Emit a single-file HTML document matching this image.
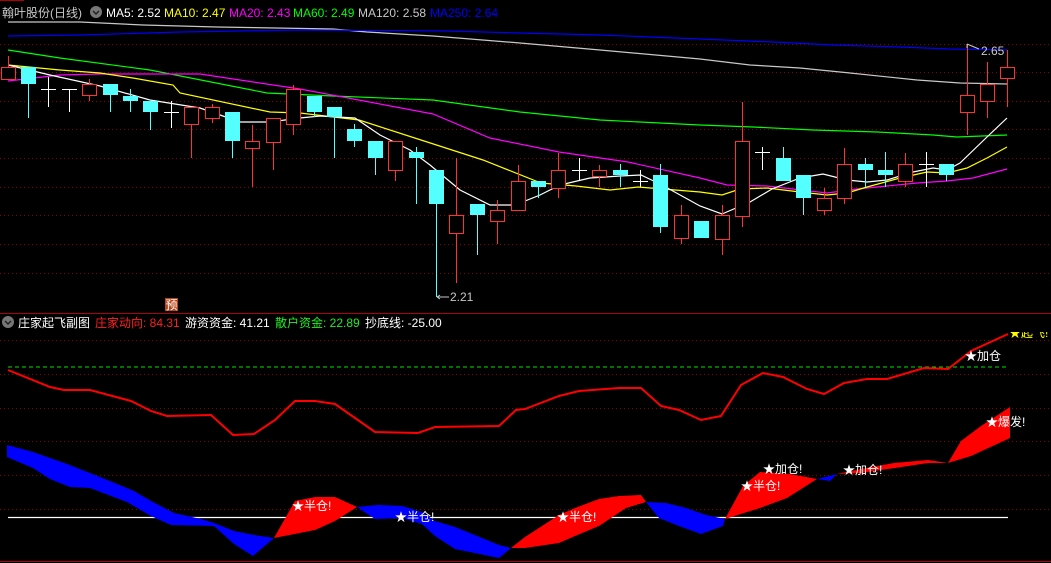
<!DOCTYPE html>
<html><head><meta charset="utf-8">
<style>
html,body{margin:0;padding:0;background:#000;overflow:hidden}
svg{display:block}
text{font-family:"Liberation Sans","Noto Sans CJK SC",sans-serif;font-size:12px}
.g{stroke:#8a0000;stroke-width:1;stroke-dasharray:1,3}
.R{fill:#000;stroke:#ff3232;stroke-width:1}
.Rw{stroke:#ff3232;stroke-width:1}
.C{fill:#54ffff}
.Cw{stroke:#54ffff;stroke-width:1}
.X{stroke:#fff;stroke-width:1}
.ma{fill:none;stroke-width:1.2}
</style></head>
<body>
<svg width="1051" height="563" viewBox="0 0 1051 563" xmlns="http://www.w3.org/2000/svg">
<rect width="1051" height="563" fill="#000"/>
<line x1="0" y1="0.5" x2="24" y2="0.5" stroke="#b00000"/>
<text x="2" y="17" fill="#c8c8c8" font-size="13">翰叶股份(日线)</text>
<circle cx="96" cy="12" r="6" fill="#777"/>
<path d="M93 11 l3 3 l3 -3" stroke="#222" stroke-width="1.5" fill="none"/>
<text x="106" y="17" fill="#fff">MA5: 2.52</text>
<text x="164" y="17" fill="#ffff00">MA10: 2.47</text>
<text x="229" y="17" fill="#ff00ff">MA20: 2.43</text>
<text x="293" y="17" fill="#00ff00">MA60: 2.49</text>
<text x="358" y="17" fill="#c8c8c8">MA120: 2.58</text>
<text x="430" y="17" fill="#0000ff">MA250: 2.64</text>
<g class="g">
<line x1="0" y1="44.5" x2="1051" y2="44.5"/><line x1="0" y1="72.5" x2="1051" y2="72.5"/>
<line x1="0" y1="101.5" x2="1051" y2="101.5"/><line x1="0" y1="129.5" x2="1051" y2="129.5"/>
<line x1="0" y1="158.5" x2="1051" y2="158.5"/><line x1="0" y1="187.5" x2="1051" y2="187.5"/>
<line x1="0" y1="215.5" x2="1051" y2="215.5"/><line x1="0" y1="244.5" x2="1051" y2="244.5"/>
<line x1="0" y1="273.5" x2="1051" y2="273.5"/>
</g>
<polyline class="ma" stroke="#c8c8c8" points="8,22 80,22 143,25 217,27 333,29 367,32 433,36 520,43 600,50 700,59 750,65 800,68 850,73 917,80 960,83 1007,84"/>
<polyline class="ma" stroke="#0000ff" points="8,36 80,35 180,32 300,30 447,31 520,33 600,35 700,39 773,42 833,45 900,47 950,49 1007,50"/>
<polyline class="ma" stroke="#00ff00" points="8,50 60,58 150,70 267,93 333,96 433,100 520,112 600,120 700,125 753,127 813,130 877,132 933,135 957,137 1007,135"/>
<polyline class="ma" stroke="#ff00ff" points="8,81 60,75 100,74 200,74 300,89 433,114 490,138 559,152 628,162 700,178 727,185 767,186 827,193 857,189 887,186 917,183 947,181 973,178 1007,169"/>
<polyline class="ma" stroke="#ffff00" points="8,65 60,70 100,73 133,78 173,85 180,93 270,112 300,113 359,120 421,140 483,160 541,183 576,186 610,190 638,187 700,192 722,195 740,189 767,188 800,192 827,195 847,193 867,187 900,178 927,172 947,173 967,168 987,158 1007,147"/>
<polyline class="ma" stroke="#ffffff" points="8,65 50,75 100,86 150,100 200,108 240,122 270,122 300,118 320,116 355,118 380,135 410,150 430,165 460,190 490,205 515,205 540,195 560,185 590,178 620,176 641,175 662,185 700,206 722,214 750,202 772,189 800,178 823,174 847,180 867,182 887,180 913,172 933,168 947,170 960,163 987,137 1007,118"/>
<g>
<line class="Rw" x1="8.5" y1="56" x2="8.5" y2="79"/><rect class="R" x="1.5" y="67.5" width="14" height="12"/>
<line class="Cw" x1="28.5" y1="67" x2="28.5" y2="118"/><rect class="C" x="21" y="67" width="15" height="17"/>
<line class="X" x1="48.5" y1="77" x2="48.5" y2="107"/><line class="X" x1="41" y1="89.5" x2="56" y2="89.5"/>
<line class="X" x1="69.5" y1="89" x2="69.5" y2="112"/><line class="X" x1="62" y1="89.5" x2="77" y2="89.5"/>
<line class="Rw" x1="89.5" y1="79" x2="89.5" y2="101"/><rect class="R" x="82.5" y="84.5" width="14" height="11"/>
<line class="Cw" x1="110.5" y1="84" x2="110.5" y2="112"/><rect class="C" x="103" y="84" width="15" height="11"/>
<line class="Cw" x1="130.5" y1="89" x2="130.5" y2="112"/><rect class="C" x="123" y="96" width="15" height="5"/>
<line class="Cw" x1="150.5" y1="101" x2="150.5" y2="130"/><rect class="C" x="143" y="101" width="15" height="11"/>
<line class="X" x1="171.5" y1="101" x2="171.5" y2="128"/><line class="X" x1="164" y1="112.5" x2="179" y2="112.5"/>
<line class="Rw" x1="191.5" y1="107" x2="191.5" y2="158"/><rect class="R" x="184.5" y="107.5" width="14" height="17"/>
<line class="Rw" x1="212.5" y1="104" x2="212.5" y2="123"/><rect class="R" x="205.5" y="107.5" width="14" height="11"/>
<line class="Cw" x1="232.5" y1="112" x2="232.5" y2="158"/><rect class="C" x="225" y="112" width="15" height="29"/>
<line class="Rw" x1="252.5" y1="125" x2="252.5" y2="187"/><rect class="R" x="245.5" y="141.5" width="14" height="7"/>
<line class="Rw" x1="273.5" y1="118" x2="273.5" y2="170"/><rect class="R" x="266.5" y="118.5" width="14" height="24"/>
<line class="Rw" x1="293.5" y1="85" x2="293.5" y2="135"/><rect class="R" x="286.5" y="89.5" width="14" height="35"/>
<line class="Cw" x1="314.5" y1="96" x2="314.5" y2="117"/><rect class="C" x="307" y="96" width="15" height="16"/>
<line class="Cw" x1="334.5" y1="107" x2="334.5" y2="158"/><rect class="C" x="327" y="107" width="15" height="10"/>
<line class="Cw" x1="354.5" y1="124" x2="354.5" y2="147"/><rect class="C" x="347" y="129" width="15" height="12"/>
<line class="Cw" x1="375.5" y1="141" x2="375.5" y2="175"/><rect class="C" x="368" y="141" width="15" height="17"/>
<line class="Rw" x1="395.5" y1="141" x2="395.5" y2="181"/><rect class="R" x="388.5" y="141.5" width="14" height="29"/>
<line class="Cw" x1="416.5" y1="147" x2="416.5" y2="204"/><rect class="C" x="409" y="152" width="15" height="6"/>
<line class="Cw" x1="436.5" y1="170" x2="436.5" y2="297"/><rect class="C" x="429" y="170" width="15" height="34"/>
<line class="Rw" x1="456.5" y1="158" x2="456.5" y2="283"/><rect class="R" x="449.5" y="215.5" width="14" height="18"/>
<line class="Cw" x1="477.5" y1="204" x2="477.5" y2="255"/><rect class="C" x="470" y="204" width="15" height="11"/>
<line class="Rw" x1="497.5" y1="200" x2="497.5" y2="244"/><rect class="R" x="490.5" y="210.5" width="14" height="11"/>
<line class="Rw" x1="518.5" y1="165" x2="518.5" y2="210"/><rect class="R" x="511.5" y="181.5" width="14" height="29"/>
<line class="Cw" x1="538.5" y1="181" x2="538.5" y2="198"/><rect class="C" x="531" y="181" width="15" height="6"/>
<line class="Rw" x1="558.5" y1="153" x2="558.5" y2="198"/><rect class="R" x="551.5" y="170.5" width="14" height="18"/>
<line class="X" x1="579.5" y1="158" x2="579.5" y2="181"/><line class="X" x1="572" y1="170.5" x2="587" y2="170.5"/>
<line class="Rw" x1="599.5" y1="165" x2="599.5" y2="187"/><rect class="R" x="592.5" y="170.5" width="14" height="6"/>
<line class="Cw" x1="620.5" y1="164" x2="620.5" y2="187"/><rect class="C" x="613" y="170" width="15" height="5"/>
<line class="X" x1="640.5" y1="170" x2="640.5" y2="187"/><line class="X" x1="633" y1="181.5" x2="648" y2="181.5"/>
<line class="Cw" x1="660.5" y1="164" x2="660.5" y2="233"/><rect class="C" x="653" y="175" width="15" height="52"/>
<line class="Rw" x1="681.5" y1="205" x2="681.5" y2="244"/><rect class="R" x="674.5" y="215.5" width="14" height="23"/>
<line class="Cw" x1="701.5" y1="221" x2="701.5" y2="238"/><rect class="C" x="694" y="221" width="15" height="17"/>
<line class="Rw" x1="722.5" y1="205" x2="722.5" y2="255"/><rect class="R" x="715.5" y="215.5" width="14" height="24"/>
<line class="Rw" x1="742.5" y1="102" x2="742.5" y2="227"/><rect class="R" x="735.5" y="141.5" width="14" height="75"/>
<line class="X" x1="762.5" y1="147" x2="762.5" y2="170"/><line class="X" x1="755" y1="152.5" x2="770" y2="152.5"/>
<line class="Cw" x1="783.5" y1="147" x2="783.5" y2="181"/><rect class="C" x="776" y="158" width="15" height="23"/>
<line class="Cw" x1="803.5" y1="175" x2="803.5" y2="215"/><rect class="C" x="796" y="175" width="15" height="23"/>
<line class="Rw" x1="824.5" y1="188" x2="824.5" y2="215"/><rect class="R" x="817.5" y="198.5" width="14" height="12"/>
<line class="Rw" x1="844.5" y1="148" x2="844.5" y2="204"/><rect class="R" x="837.5" y="164.5" width="14" height="34"/>
<line class="Cw" x1="865.5" y1="158" x2="865.5" y2="187"/><rect class="C" x="858" y="164" width="15" height="6"/>
<line class="Cw" x1="885.5" y1="152" x2="885.5" y2="187"/><rect class="C" x="878" y="170" width="15" height="5"/>
<line class="Rw" x1="905.5" y1="153" x2="905.5" y2="187"/><rect class="R" x="898.5" y="164.5" width="14" height="17"/>
<line class="X" x1="926.5" y1="152" x2="926.5" y2="187"/><line class="X" x1="919" y1="164.5" x2="934" y2="164.5"/>
<line class="Cw" x1="946.5" y1="164" x2="946.5" y2="181"/><rect class="C" x="939" y="164" width="15" height="11"/>
<line class="Rw" x1="967.5" y1="44" x2="967.5" y2="135"/><rect class="R" x="960.5" y="95.5" width="14" height="17"/>
<line class="Rw" x1="987.5" y1="62" x2="987.5" y2="118"/><rect class="R" x="980.5" y="84.5" width="14" height="17"/>
<line class="Rw" x1="1007.5" y1="50" x2="1007.5" y2="107"/><rect class="R" x="1000.5" y="67.5" width="14" height="11"/>
</g>
<path d="M437 297 h12 M437 297 l3 -2 M437 297 l3 2" stroke="#c8c8c8" fill="none"/>
<text x="450" y="301" fill="#c8c8c8">2.21</text>
<path d="M967 44 l12 5 M967 44 l0 4" stroke="#c8c8c8" fill="none"/>
<text x="981" y="55" fill="#c8c8c8">2.65</text>
<rect x="165" y="298" width="13" height="13" fill="#b8451a"/>
<text x="165.5" y="309" fill="#fff" font-size="11">预</text>
<line x1="0" y1="313.5" x2="1051" y2="313.5" stroke="#b00000"/>
<circle cx="8" cy="322" r="6" fill="#777"/>
<path d="M5 321 l3 3 l3 -3" stroke="#222" stroke-width="1.5" fill="none"/>
<text x="18" y="327" fill="#fff">庄家起飞副图</text>
<text x="95" y="327" fill="#ff2020">庄家动向: 84.31</text>
<text x="185" y="327" fill="#fff">游资资金: 41.21</text>
<text x="275" y="327" fill="#22ee22">散户资金: 22.89</text>
<text x="365" y="327" fill="#fff">抄底线: -25.00</text>
<text x="1009" y="337" fill="#ffff00">★起飞!</text>
<rect x="1000" y="314" width="51" height="18" fill="#000"/>
<g class="g">
<line x1="0" y1="340.5" x2="1051" y2="340.5"/><line x1="0" y1="374.5" x2="1051" y2="374.5"/>
<line x1="0" y1="408.5" x2="1051" y2="408.5"/><line x1="0" y1="441.5" x2="1051" y2="441.5"/>
<line x1="0" y1="475.5" x2="1051" y2="475.5"/><line x1="0" y1="509.5" x2="1051" y2="509.5"/>
</g>
<line x1="0" y1="561.5" x2="1051" y2="561.5" stroke="#b00000"/>
<line x1="8" y1="367" x2="1008" y2="367" stroke="#00e000" stroke-width="1" stroke-dasharray="4,3"/>
<line x1="8" y1="517.5" x2="1008" y2="517.5" stroke="#fff" stroke-width="1.3"/>
<polygon fill="#0000ff" points="7,445 33,452 67,464 100,477 134,491 151,501 174,513 201,519 214,523 234,531 254,535 274,538 253,556 234,544 214,526 171,525 151,516 127,502 90,488 70,487 50,479 33,468 7,457"/>
<polygon fill="#ff0000" points="274,538 295,501 315,497 335,497 357,507 335,521 315,530"/>
<polygon fill="#0000ff" points="357,507 378,505 402,506 422,512 435,521 455,527 482,538 499,545 511,548 499,558 455,549 435,536 422,524 402,518 375,519"/>
<polygon fill="#ff0000" points="511,548 525,537 542,526 559,515 575,508 599,499 619,496 641,495 646,502 626,508 599,526 575,536 559,543 525,548"/>
<polygon fill="#0000ff" points="646,502 666,503 686,508 706,515 725,519 723,526 701,534 679,526 659,518"/>
<polygon fill="#ff0000" points="725,519 743,486 760,472 790,474 817,479 787,498 760,508"/>
<polygon fill="#0000ff" points="817,479 837,474 830,481"/>
<polygon fill="#ff0000" points="837,474 861,469 894,463 928,460 948,463 961,441 981,426 1010,407 1010,438 971,456 948,463 928,463 861,473"/>
<polyline fill="none" stroke="#ff0000" stroke-width="2" points="8,370 50,387 64,390 90,390 131,401 151,411 167,416 211,415 233,435 254,434 275,420 295,401 315,401 335,404 355,418 375,432 418,433 435,427 499,426 516,410 525,409 559,396 579,391 619,388 641,388 661,406 679,410 701,420 721,416 741,385 763,373 783,377 807,389 824,394 844,383 867,379 887,379 924,368 948,369 971,351 1008,334"/>
<g fill="#fff">
<text x="292" y="510">★半仓!</text>
<text x="395" y="521">★半仓!</text>
<text x="557" y="521">★半仓!</text>
<text x="741" y="490">★半仓!</text>
<text x="763" y="473">★加仓!</text>
<text x="843" y="474">★加仓!</text>
<text x="965" y="360">★加仓</text>
<text x="986" y="426">★爆发!</text>
</g>
</svg>
</body></html>
